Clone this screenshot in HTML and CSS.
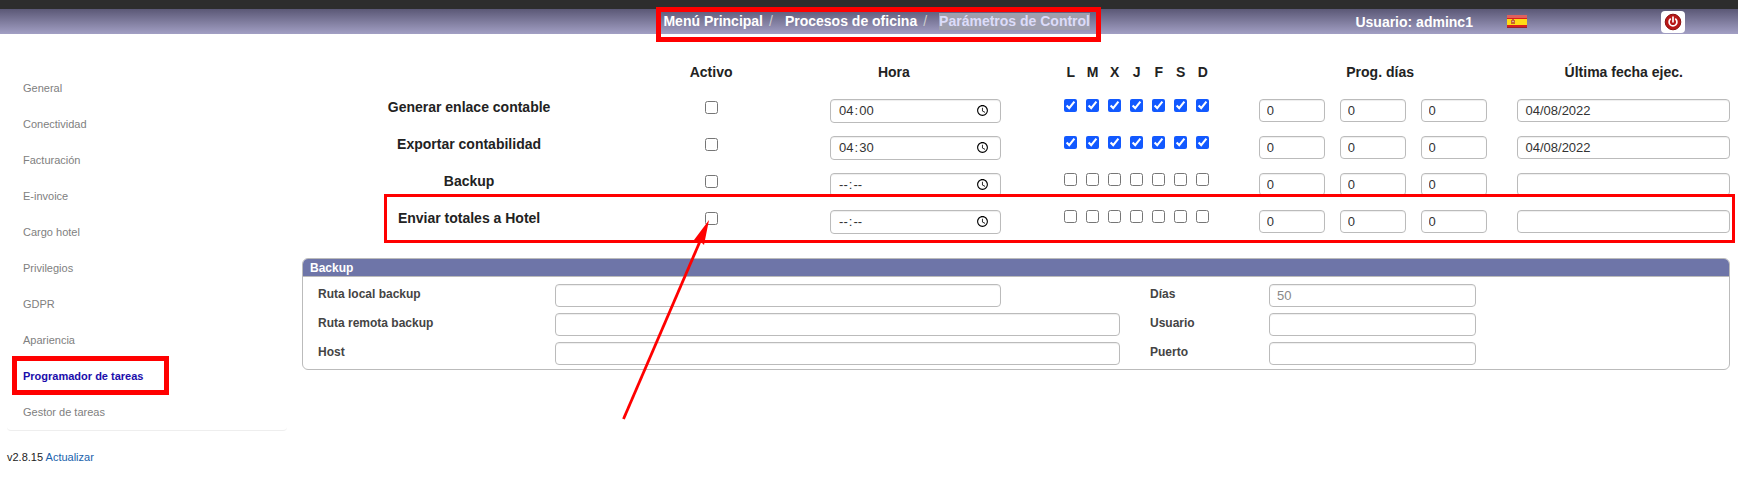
FILE: index.html
```
<!DOCTYPE html>
<html lang="es">
<head>
    <meta charset="UTF-8">
    <meta name="viewport" content="width=device-width, initial-scale=1.0">
    <title>Parámetros de Control</title>
    <link rel="stylesheet" href="styles.css">
</head>
<body>
<header class="topbar">
    <nav class="breadcrumb">
        <a href="#">Menú Principal</a><span class="sep">/</span>
        <a href="#">Procesos de oficina</a><span class="sep">/</span>
        <a href="#" class="current">Parámetros de Control</a>
    </nav>
    <span class="user">Usuario: adminc1</span>
    <button class="flag" aria-label="Español">
        <svg width="20" height="13" viewBox="0 0 20 13">
            <rect width="20" height="13" fill="#d8201c"/>
            <rect width="20" height="3" fill="#e0605c"/>
            <rect y="4" width="20" height="6" fill="#ffdc14"/>
            <path d="M4 5h1v-1h2v1h1v4h-4z" fill="#c8642c"/>
            <path d="M5 6h2v1h-2z" fill="#d8a0a0"/>
            <path d="M0 12.5h20" stroke="#98242c"/>
        </svg>
    </button>
    <button class="logout" aria-label="Salir">
        <svg width="18" height="18" viewBox="0 0 18 18">
            <circle cx="9" cy="9" r="7.8" fill="#b81818" stroke="#8c1010"/>
            <path d="M6.3 6.2a3.9 3.9 0 1 0 5.4 0M9 4.2v4.6" fill="none" stroke="#fff" stroke-width="1.7" stroke-linecap="round"/>
        </svg>
    </button>
</header>

<div class="page">
    <aside class="sidebar">
        <ul class="menu">
            <li><a href="#">General</a></li>
            <li><a href="#">Conectividad</a></li>
            <li><a href="#">Facturación</a></li>
            <li><a href="#">E-invoice</a></li>
            <li><a href="#">Cargo hotel</a></li>
            <li><a href="#">Privilegios</a></li>
            <li><a href="#">GDPR</a></li>
            <li><a href="#">Apariencia</a></li>
            <li><a href="#" class="active">Programador de tareas</a></li>
            <li><a href="#">Gestor de tareas</a></li>
        </ul>
        <p class="version">v2.8.15 <a href="#">Actualizar</a></p>
    </aside>

    <main class="content">
        <table class="tasks">
            <colgroup>
                <col class="col-name">
                <col class="col-active">
                <col class="col-hour">
                <col class="col-week">
                <col class="col-days">
                <col class="col-date">
            </colgroup>
            <thead>
                <tr>
                    <td></td>
                    <th scope="col">Activo</th>
                    <th scope="col">Hora</th>
                    <th scope="col" class="week">
                        <div class="week-row"><span>L</span><span>M</span><span>X</span><span>J</span><span>F</span><span>S</span><span>D</span></div>
                    </th>
                    <th scope="col">Prog. días</th>
                    <th scope="col" class="date">Última fecha ejec.</th>
                </tr>
            </thead>
            <tbody id="task-rows"></tbody>
        </table>

        <section class="panel">
            <h2>Backup</h2>
            <div class="panel-body">
                <label for="ruta-local">Ruta local backup</label>
                <input type="text" id="ruta-local" class="short">
                <label for="dias">Días</label>
                <input type="text" id="dias" placeholder="50">

                <label for="ruta-remota">Ruta remota backup</label>
                <input type="text" id="ruta-remota">
                <label for="usuario">Usuario</label>
                <input type="text" id="usuario">

                <label for="host">Host</label>
                <input type="text" id="host">
                <label for="puerto">Puerto</label>
                <input type="text" id="puerto">
            </div>
        </section>

        <svg class="arrow" width="90" height="202" viewBox="0 0 90 202">
            <path d="M1.500 200L79 20" stroke="#f00" stroke-width="2.8"/>
            <path d="M87 1L72 21L76 22L77 24L80 24L82 26Z" fill="#f00"/>
        </svg>
    </main>
</div>

<script src="script.js"></script>
</body>
</html>
```
FILE: styles.css
```
* {
    box-sizing: border-box;
}

body {
    margin: 0;
    background-color: #fff;
    color: #222;
    font-family: "Liberation Sans", Arial, sans-serif;
    font-size: 14px;
}

a {
    text-decoration: none;
}

/* Header */
.topbar {
    display: grid;
    grid-template-columns: 694fr 151fr 154fr 77fr;
    align-items: center;
    height: 34px;
    padding-left: 38%;
    border-top: 9px solid #2d2d2d;
    background: linear-gradient(#5b5876, #a29fc4);
    font-weight: bold;
    white-space: nowrap;
}

.breadcrumb {
    position: relative;
    display: flex;
    justify-self: start;
    align-items: center;
    padding: 0 6px 0 3px;
    line-height: 17px;
}

.breadcrumb::after {
    content: "";
    position: absolute;
    inset: -6px -5px -12px -4px;
    border: 5px solid #f00;
    pointer-events: none;
}

.breadcrumb a,
.user {
    color: #fff;
}

.breadcrumb .sep {
    padding: 0 12px 0 6px;
    color: #ccc;
    font-weight: normal;
}

.breadcrumb .current {
    background-color: #9f9fae;
    color: #dcdcfa;
}

.flag,
.logout {
    display: flex;
    justify-self: start;
    align-items: center;
    justify-content: center;
    padding: 0;
    border: 0;
    background: none;
}

.logout {
    width: 24px;
    height: 22px;
    border-radius: 4px;
    background-color: #fff;
}

/* Layout */
.page {
    display: grid;
    grid-template-columns: 295px 1fr;
    padding: 22px 8px 0 7px;
}

/* Sidebar */
.menu {
    margin: 0 15px 0 0;
    padding: 14px 0 0 16px;
    border-bottom: 1px solid #eee;
    border-radius: 4px;
    list-style: none;
    font-size: 11px;
}

.menu li {
    height: 36px;
    line-height: 36px;
}

.menu a {
    position: relative;
    color: #808080;
}

.menu .active {
    color: #1a0dab;
    font-weight: bold;
}

.menu .active::after {
    content: "";
    position: absolute;
    inset: -14px -26px -13px -11px;
    border: 5px solid #f00;
}

.version {
    margin: 20px 0 0 0;
    font-size: 11px;
}

.version a {
    color: #1a62ac;
}

/* Inputs */
input[type="text"],
input[type="time"] {
    width: 100%;
    height: 23px;
    margin: 0;
    padding: 0 7px 1px 7px;
    border: 1px solid #bbb;
    border-radius: 4px;
    background-color: #fff;
    box-shadow: inset 0 1px 1px #eee;
    color: #333;
    font-family: inherit;
    font-size: 13px;
}

input[type="time"] {
    height: 24px;
}

input::-webkit-datetime-edit-ampm-field {
    display: none;
}

input::placeholder {
    color: #888;
}

input[type="checkbox"] {
    width: 13px;
    height: 13px;
    margin: 0;
    accent-color: #1259ff;
}

/* Task table */
.content {
    position: relative;
}

.tasks {
    width: 100%;
    table-layout: fixed;
    border-collapse: collapse;
}

.col-name { width: 23.4%; }
.col-active { width: 10.5%; }
.col-hour { width: 15.1%; }
.col-week { width: 18%; }
.col-days { width: 17%; }
.col-date { width: 16%; }

.tasks th,
.tasks td {
    padding: 0;
    text-align: center;
    vertical-align: top;
    line-height: 17px;
}

.tasks thead tr {
    height: 43px;
}

.tasks thead th {
    padding-top: 8px;
}

.tasks tbody tr {
    position: relative;
    height: 37px;
}

.tasks .active {
    padding-top: 2px;
}

.tasks .active input {
    display: block;
    margin: 0 auto;
}

.tasks .hour {
    padding: 0 1px 0 44px;
}

.tasks .week {
    padding-left: 58px;
}

.week-row {
    display: flex;
}

.week-row span,
.week-row input {
    flex: none;
}

.week-row span {
    width: 22px;
}

.tasks .week-row input {
    margin: 0 5px 0 4px;
}

.day-row {
    display: flex;
    gap: 15px;
    padding-right: 15px;
}

.tasks .date {
    padding-left: 16px;
}

.tasks .highlight::after {
    content: "";
    position: absolute;
    inset: -16px -5px 4px 82px;
    border: 3px solid #f00;
    pointer-events: none;
}

/* Backup panel */
.panel {
    margin-top: 11px;
    border: 1px solid #bbb;
    border-radius: 6px;
    overflow: hidden;
}

.panel h2 {
    margin: 0;
    padding: 1px 7px 0 7px;
    border-bottom: 1px solid #bbb;
    background-color: #6e75a8;
    color: #fff;
    font-size: 12px;
    line-height: 16px;
}

.panel-body {
    display: grid;
    grid-template-columns: 237fr 595fr 119fr 207fr 253fr;
    row-gap: 6px;
    padding: 7px 0 4px 15px;
}

.panel-body label {
    color: #444;
    font-size: 12px;
    font-weight: bold;
    line-height: 20px;
}

.panel-body label:nth-of-type(odd) {
    grid-column: 1;
}

.panel-body input:nth-of-type(odd) {
    width: 95%;
}

.panel-body input.short {
    width: 75%;
}

.arrow {
    position: absolute;
    left: 320px;
    top: 163px;
    pointer-events: none;
}
```
FILE: script.js
```
const DAYS = ["L", "M", "X", "J", "F", "S", "D"];

const tasks = [
    { name: "Generar enlace contable", hour: "04:00", week: true, date: "04/08/2022" },
    { name: "Exportar contabilidad", hour: "04:30", week: true, date: "04/08/2022" },
    { name: "Backup", hour: "", week: false, date: "" },
    { name: "Enviar totales a Hotel", hour: "", week: false, date: "", highlight: true }
];

function renderTask(task) {
    const week = DAYS.map(day =>
        `<input type="checkbox" aria-label="${task.name}: ${day}" ${task.week ? "checked" : ""}>`
    ).join("");
    const days = [1, 2, 3].map(n =>
        `<input type="text" aria-label="${task.name}: día ${n}" value="0">`
    ).join("");

    return `<tr class="${task.highlight ? "highlight" : ""}">
        <th scope="row">${task.name}</th>
        <td class="active"><input type="checkbox" aria-label="${task.name}: activo"></td>
        <td class="hour"><input type="time" aria-label="${task.name}: hora" value="${task.hour}"></td>
        <td class="week"><div class="week-row">${week}</div></td>
        <td><div class="day-row">${days}</div></td>
        <td class="date"><input type="text" aria-label="${task.name}: última fecha" value="${task.date}"></td>
    </tr>`;
}

document.getElementById("task-rows").innerHTML = tasks.map(renderTask).join("");
```
